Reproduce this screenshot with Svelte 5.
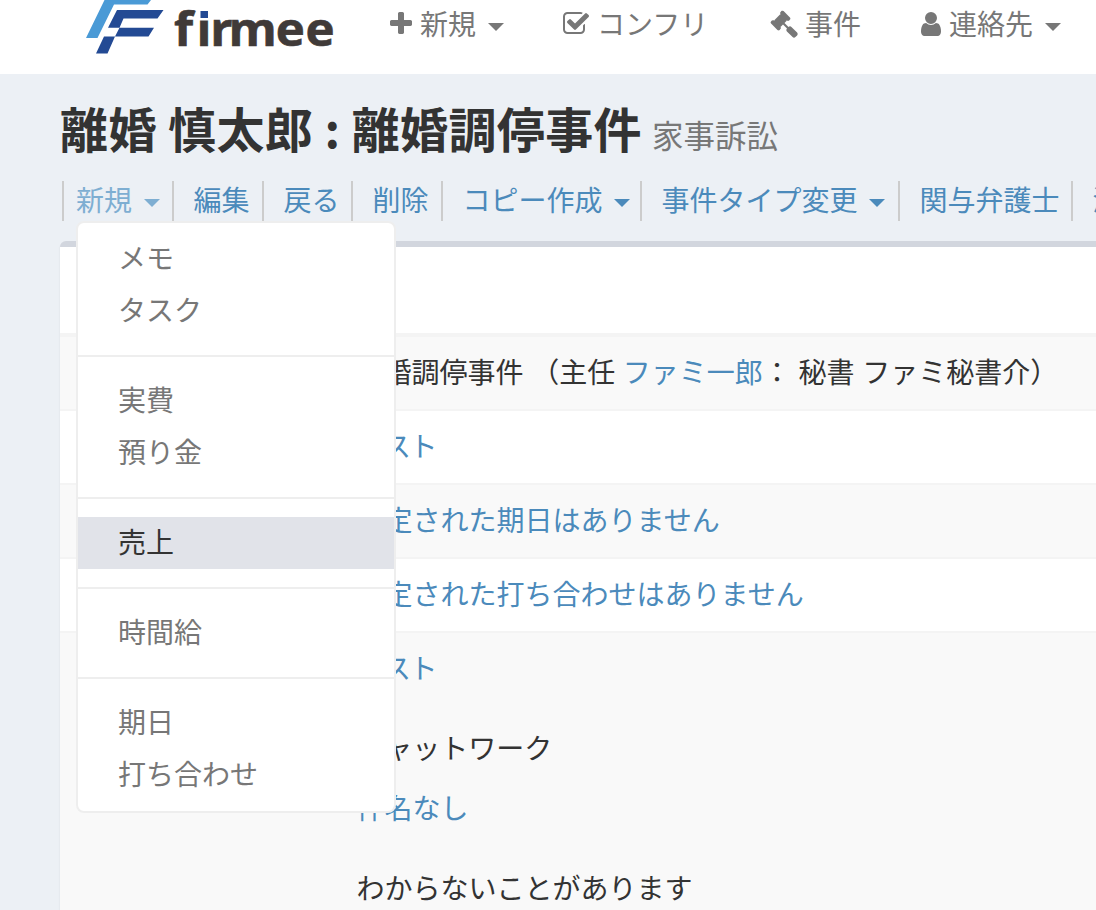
<script>
  const actions = [
    { label: '新規', caret: true, active: true, w: 110 },
    { label: '編集', w: 90 },
    { label: '戻る', w: 89 },
    { label: '削除', w: 90 },
    { label: 'コピー作成', caret: true, w: 199 },
    { label: '事件タイプ変更', caret: true, w: 258 },
    { label: '関与弁護士', w: 173 },
    { label: '添付', w: 90 }
  ];
  const groups = [['メモ', 'タスク'], ['実費', '預り金'], ['売上'], ['時間給'], ['期日', '打ち合わせ']];
</script>

<header>
  <svg class="logo" width="260" height="60" viewBox="80 0 260 60">
    <path fill="#4a9ad6" d="M104.5 0H151L147.500 4.500H114L97.500 38H86z" />
    <path fill="#234a94" d="M117 10H163.500L157.500 18.500H123.500L119.500 27.700H154L148.500 36.500H115L107.500 53.500H96L104 36.500H115L119.500 27.700H108z" />
    <text transform="translate(174 46) scale(1.07 1)" x="0 21 34 51 95 123">firmee</text>
    <rect x="199" y="6" width="11" height="14.500" fill="#fff" />
    <rect x="200.5" y="11" width="7.5" height="7" fill="#234a94" />
  </svg>
  <nav>
    <a class="n1"><svg class="ic" viewBox="0 0 1792 1792"><path d="M1600 736v192q0 40-28 68t-68 28h-416v416q0 40-28 68t-68 28h-192q-40 0-68-28t-28-68v-416h-416q-40 0-68-28t-28-68v-192q0-40 28-68t68-28h416v-416q0-40 28-68t68-28h192q40 0 68 28t28 68v416h416q40 0 68 28t28 68z" /></svg><span>新規</span><i class="caret"></i></a>
    <a class="n2"><svg class="ic" viewBox="0 0 1792 1792"><path d="M1472 930v318q0 119-84.5 203.5t-203.5 84.5h-832q-119 0-203.5-84.5t-84.5-203.5v-832q0-119 84.5-203.5t203.5-84.5h832q63 0 117 25 15 7 18 23 3 17-9 29l-49 49q-10 10-23 10-3 0-9-2-23-6-45-6h-832q-66 0-113 47t-47 113v832q0 66 47 113t113 47h832q66 0 113-47t47-113v-254q0-13 9-22l64-64q10-10 23-10 6 0 12 3 20 8 20 29zm231-489l-814 814q-24 24-57 24t-57-24l-430-430q-24-24-24-57t24-57l110-110q24-24 57-24t57 24l263 263 647-647q24-24 57-24t57 24l110 110q24 24 24 57t-24 57z" /></svg><span>コンフリ</span></a>
    <a class="n3"><svg class="ic" viewBox="0 0 1792 1792"><path d="M1771 1536q0 53-37 90l-107 108q-39 37-91 37-53 0-90-37l-363-364q-38-36-38-90 0-53 43-96l-256-256-126 126q-14 14-34 14t-34-14q2 2 12.5 12t12.5 13 10 11.5 10 13.5 6 13.5 5.5 16.5 1.5 18q0 38-28 68-3 3-16.5 18t-19 20.5-18.5 16.5-22 15.5-22 9-26 4.5q-40 0-68-28l-408-408q-28-28-28-68 0-13 4.5-26t9-22 15.5-22 16.5-18.5 20.5-19 18-16.5q30-28 68-28 10 0 18 1.5t16.5 5.5 13.5 6 13.5 10 11.5 10 13 12.5 12 12.5q-14-14-14-34t14-34l348-348q14-14 34-14t34 14q-2-2-12.5-12t-12.5-13-10-11.5-10-13.5-6-13.5-5.5-16.5-1.5-18q0-38 28-68 3-3 16.5-18t19-20.5 18.5-16.5 22-15.5 22-9 26-4.5q40 0 68 28l408 408q28 28 28 68 0 13-4.5 26t-9 22-15.5 22-16.5 18.5-20.5 19-18 16.5q-30 28-68 28-10 0-18-1.5t-16.5-5.5-13.5-6-13.5-10-11.5-10-13-12.5-12-12.5q14 14 14 34t-14 34l-126 126 256 256q43-43 96-43 52 0 91 37l363 363q37 39 37 91z" /></svg><span>事件</span></a>
    <a class="n4"><svg class="ic" viewBox="0 0 1792 1792"><path d="M1536 1399q0 109-62.5 187t-150.5 78h-854q-88 0-150.5-78t-62.5-187q0-85 8.5-160.5t31.5-152 58.5-131 94-89 134.5-34.5q131 128 313 128t313-128q76 0 134.5 34.5t94 89 58.5 131 31.5 152 8.5 160.5zm-256-887q0 159-112.5 271.5t-271.5 112.5-271.5-112.5-112.5-271.5 112.5-271.5 271.5-112.5 271.5 112.5 112.5 271.5z" /></svg><span>連絡先</span><i class="caret"></i></a>
  </nav>
</header>

<main>
  <h1>離婚 慎太郎 : 離婚調停事件<small>家事訴訟</small></h1>

  <ul class="actions">
    {#each actions as a}
      <li class:active={a.active} style:width="{a.w}px">
        <a>{a.label}</a>{#if a.caret}<i class="caret"></i>{/if}
        {#if a.active}
          <div class="menu">
            {#each groups as g, i}
              {#if i > 0}<hr />{/if}
              {#each g as item}
                <div class="item" class:hover={item === '売上'}>{item}</div>
              {/each}
            {/each}
          </div>
        {/if}
      </li>
    {/each}
  </ul>

  <section class="box">
    <div class="head"></div>
    <div class="row odd first">離婚調停事件 （主任 <a>ファミ一郎</a>： 秘書 ファミ秘書介）</div>
    <div class="row"><a class="tight">テスト</a></div>
    <div class="row odd"><a>予定された期日はありません</a></div>
    <div class="row"><a>予定された打ち合わせはありません</a></div>
    <div class="row odd last">
      <p><a class="tight">テスト</a></p>
      <p class="gap">チャットワーク</p>
      <p class="sub"><a>件名なし</a></p>
      <p class="gap">わからないことがあります</p>
    </div>
  </section>
</main>

<style>
  :global(body) {
    margin: 0;
    overflow: hidden;
    background: #ecf0f5;
  }
  :global(#app) {
    width: 1096px;
    height: 910px;
    overflow: hidden;
    font: 28px/40px 'Noto Sans CJK JP', sans-serif;
    color: #333;
  }
  header {
    display: flex;
    height: 74px;
    padding-left: 80px;
    box-sizing: border-box;
    background: #fff;
  }
  .logo {
    flex: none;
  }
  .logo text {
    font: 700 46px 'Open Sans', sans-serif;
    fill: #403a38;
    stroke: #403a38;
    stroke-width: 0.6px;
  }
  nav {
    display: flex;
    padding-left: 47px;
    color: #777;
    white-space: nowrap;
  }
  nav a {
    display: flex;
    height: 48px;
    align-items: center;
    flex: none;
  }
  nav span {
    padding-bottom: 3px;
  }
  .ic {
    width: 28px;
    height: 28px;
    fill: currentColor;
  }
  .n1 { width: 175px; }
  .n1 span { margin-left: 5px; }
  .n2 { width: 208px; }
  .n2 span { margin-left: 7px; }
  .n3 { width: 147px; }
  .n3 span { margin-left: 7px; }
  .n4 span { margin-left: 4px; }
  .caret {
    display: inline-block;
    border: 8px solid transparent;
    border-top-color: currentColor;
    border-bottom: 0;
    margin: 5px 0 0 12px;
  }
  main {
    padding-left: 60px;
  }
  h1 {
    margin: 0;
    height: 106px;
    padding-top: 18px;
    box-sizing: border-box;
    font-size: 48px;
    line-height: 70px;
    font-weight: 700;
    letter-spacing: 0.38px;
    white-space: nowrap;
  }
  small {
    margin-left: 10px;
    font-size: 31.5px;
    font-weight: 400;
    letter-spacing: 0;
    color: #777;
  }
  .actions {
    display: flex;
    list-style: none;
    margin: 0;
    padding: 0 0 0 2px;
    height: 61px;
    color: #4b8abb;
    white-space: nowrap;
  }
  li {
    position: relative;
    display: flex;
    align-items: center;
    flex: none;
    height: 40px;
    margin-top: 1px;
    padding-left: 19.5px;
    box-sizing: border-box;
    border-left: 2px solid #ccc;
  }
  li > a {
    padding-bottom: 4px;
  }
  li .caret {
    margin-top: 4px;
    margin-left: 11.500px;
  }
  li.active {
    padding-left: 12px;
    color: #7eaed2;
  }
  .menu {
    position: absolute;
    z-index: 2;
    left: 12px;
    top: 40px;
    width: 316px;
    padding: 10px 0;
    border: 2px solid #eee;
    border-radius: 8px;
    background: #fff;
    color: #777;
  }
  .item {
    height: 52px;
    line-height: 48px;
    padding-left: 40px;
  }
  .item.hover {
    background: #e1e3e9;
    color: #333;
  }
  hr {
    height: 2px;
    margin: 18px 0;
    border: 0;
    background: #eee;
  }
  .box {
    width: 1100px;
    height: 700px;
    border-top: 6px solid #d2d6de;
    border-radius: 6px 0 0;
    background: #fff;
    box-shadow: 0 2px 2px rgba(0, 0, 0, 0.1);
  }
  .head {
    height: 86px;
  }
  .row {
    height: 74px;
    box-sizing: border-box;
    padding: 14px 0 0 296.500px;
    border-top: 2px solid #f4f4f4;
    white-space: nowrap;
  }
  .odd {
    background: #f9f9f9;
  }
  .first {
    height: 76px;
    border-top-width: 4px;
    padding-left: 295.500px;
    word-spacing: 1.400px;
  }
  .row a {
    color: #4b8abb;
  }
  .row .tight {
    letter-spacing: -1.500px;
  }
  .last {
    height: 330px;
  }
  p {
    margin: 0;
  }
  .gap {
    margin-top: 40px;
  }
  .sub {
    margin-top: 20px;
  }
</style>
